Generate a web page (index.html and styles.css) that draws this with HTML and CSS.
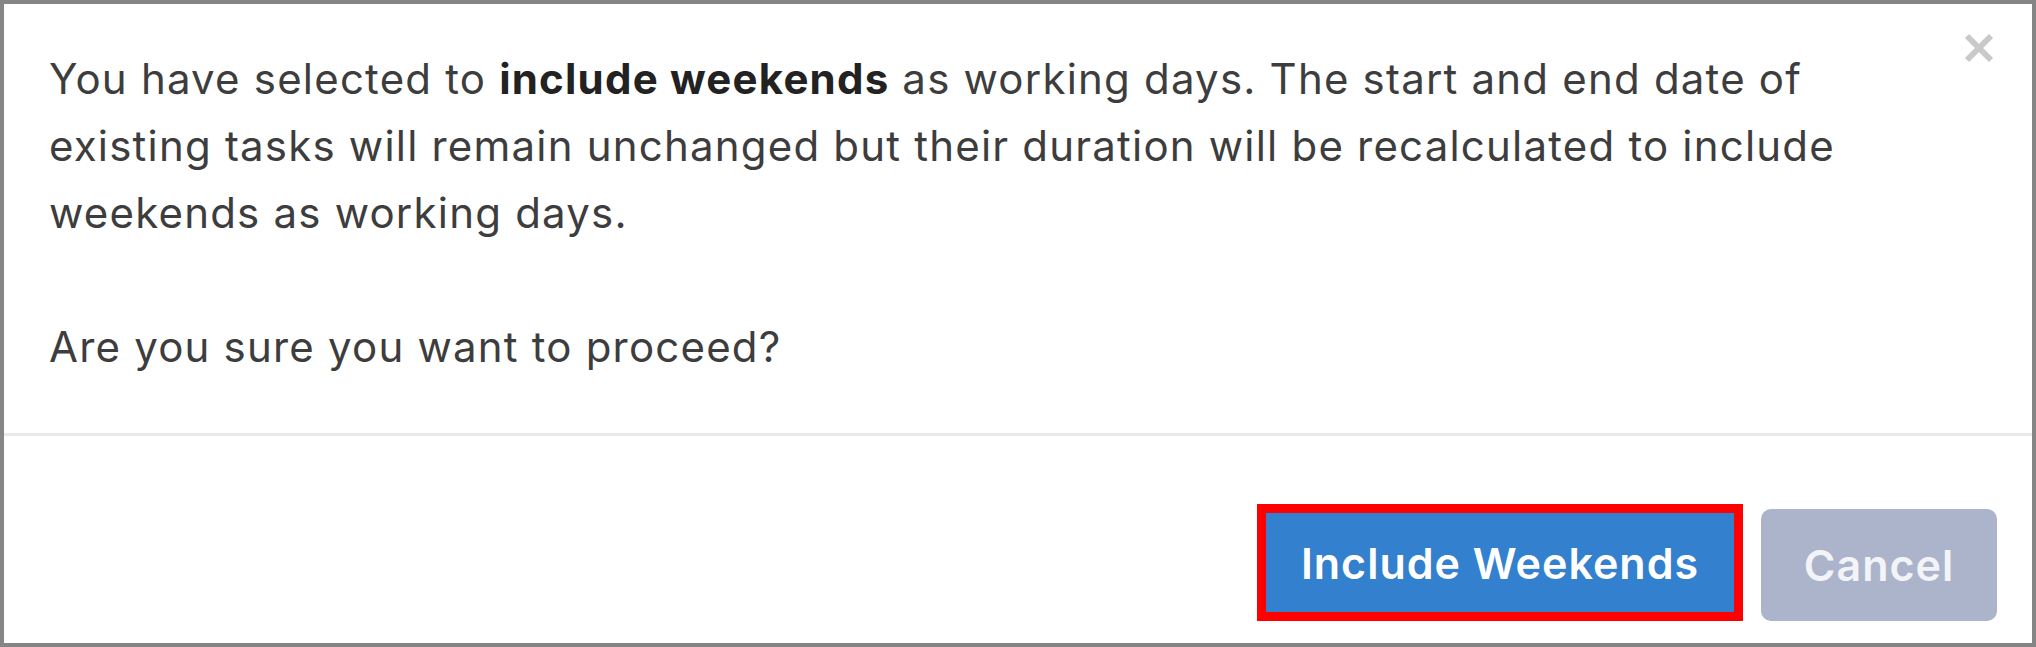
FILE: index.html
```html
<!DOCTYPE html>
<html lang="en">
<head>
  <meta charset="UTF-8">
  <meta name="viewport" content="width=device-width, initial-scale=1.0">
  <title>Include Weekends</title>
  <link rel="stylesheet" href="styles.css">
</head>
<body>
  <div class="dialog">
    <button class="close-btn" aria-label="Close">
      <svg viewBox="0 0 32 32" width="32" height="32">
        <path d="M4 4 L28 28 M28 4 L4 28" stroke="#c9c9c9" stroke-width="6" stroke-linecap="butt"/>
      </svg>
    </button>
    <div class="dialog-body">
      <p>You have selected to <strong>include weekends</strong> as working days. The start and end date of existing tasks will remain unchanged but their duration will be recalculated to include weekends as working days.</p>
      <p>Are you sure you want to proceed?</p>
    </div>
    <div class="dialog-footer">
      <button class="btn btn-primary">Include Weekends</button>
      <button class="btn btn-cancel">Cancel</button>
    </div>
  </div>
</body>
</html>
```

FILE: styles.css
```css
html, body {
  margin: 0;
  padding: 0;
}
body {
  font-family: Inter, "Noto Sans", sans-serif;
  background: #ffffff;
}
.dialog {
  position: relative;
  box-sizing: border-box;
  width: 2036px;
  height: 647px;
  border: 4px solid #858585;
  background: #ffffff;
  display: flex;
  flex-direction: column;
}
.close-btn {
  position: absolute;
  top: 28px;
  right: 37px;
  padding: 0;
  border: none;
  background: none;
  cursor: pointer;
}
.close-btn svg {
  display: block;
}
.dialog-body {
  padding: 41px 130px 53px 45px;
  border-bottom: 3px solid #e9e9e9;
}
.dialog-body p {
  margin: 0;
  font-size: 42px;
  letter-spacing: 1.2px;
  line-height: 67px;
  color: #3d3d3d;
}
.dialog-body p + p {
  margin-top: 67px;
}
.dialog-body strong {
  font-weight: 700;
  color: #222222;
}
.dialog-footer {
  flex: 1;
  display: flex;
  justify-content: flex-end;
  align-items: flex-end;
  gap: 18px;
  padding: 0 35px 22px 0;
}
.btn {
  font-family: Inter, "Noto Sans", sans-serif;
  font-size: 43px;
  letter-spacing: 1px;
  font-weight: 600;
  color: #ffffff;
  border: none;
  cursor: pointer;
  box-sizing: border-box;
  padding: 0;
}
.btn-primary {
  width: 486px;
  height: 117px;
  background: #3380cf;
  border: 9px solid #ff0000;
}
.btn-cancel {
  width: 236px;
  height: 112px;
  background: #abb4ca;
  color: #f2f4f8;
  border-radius: 10px;
}
```
